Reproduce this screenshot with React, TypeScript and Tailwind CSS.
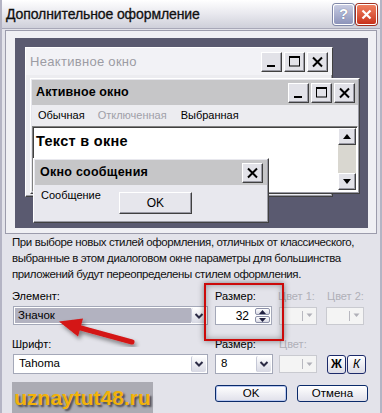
import React from "react";

const raised =
  "border border-solid border-t-white border-l-white border-r-[#404040] border-b-[#404040] shadow-[inset_-1px_-1px_0_#9a9aa4]";

function MinIcon() {
  return (
    <svg width="13" height="13" viewBox="0 0 13 13">
      <rect x="2" y="10" width="8" height="2" fill="#000" />
    </svg>
  );
}
function MaxIcon() {
  return (
    <svg width="13" height="13" viewBox="0 0 13 13">
      <rect x="1.5" y="1.5" width="10" height="9.5" fill="none" stroke="#000" strokeWidth="1" />
      <rect x="1" y="1" width="11" height="2" fill="#000" />
    </svg>
  );
}
function CloseIcon() {
  return (
    <svg width="13" height="12" viewBox="0 0 13 12">
      <path d="M2 1.5 L11 10.5 M11 1.5 L2 10.5" stroke="#000" strokeWidth="2" />
    </svg>
  );
}

function WinBtn({ children }: { children: React.ReactNode }) {
  return (
    <div className={`w-[21px] h-[20px] flex items-center justify-center bg-[#e2e2e8] ${raised}`}>
      {children}
    </div>
  );
}

function Chevron({ color = "#2b2b45" }: { color?: string }) {
  return (
    <svg width="10" height="8" viewBox="0 0 10 8">
      <path d="M1.5 2 L5 5.5 L8.5 2" fill="none" stroke={color} strokeWidth="2" />
    </svg>
  );
}

function DropBtn() {
  return (
    <div className="w-[15px] h-full flex items-center justify-center bg-gradient-to-b from-white to-[#d8d9e4] border-l border-[#c5c8d6] rounded-[2px]">
      <Chevron />
    </div>
  );
}

function DisabledCombo({ className = "" }: { className?: string }) {
  return (
    <div className={`h-[18px] border border-[#c9cad0] bg-[#f4f4f4] flex items-center justify-end ${className}`}>
      <div className="w-[1px] h-[10px] bg-[#b8b8c0] mr-[3px]" />
      <svg width="7" height="5" viewBox="0 0 7 5" className="mr-[3px]">
        <path d="M0.5 0.5 L6.5 0.5 L3.5 4 Z" fill="#b0b0b8" />
      </svg>
    </div>
  );
}

export default function App() {
  return (
    <div className="relative w-[382px] h-[413px] overflow-hidden bg-[#e3e3ea] font-['Liberation_Sans',Arial,sans-serif] text-black border-x-[2px] border-[#b4b4c4]">
      {/* Title bar */}
      <div className="h-[29px] flex items-center justify-between pl-[4px] pr-[3px] bg-gradient-to-b from-[#ffffff] via-[#e8e8ee] to-[#cfd0da] border-b border-[#a8a8b8]">
        <span className="text-[14px] tracking-[-0.1px] text-[#101010] [-webkit-text-stroke:0.3px_#101010]">Дополнительное оформление</span>
        <div className="flex gap-[2px]">
          <div className="w-[21px] h-[21px] rounded-[3px] border border-white bg-gradient-to-b from-[#c8cce2] to-[#8d94ba] flex items-center justify-center shadow-[0_0_0_1px_#8088a8]">
            <span className="text-[15px] font-bold text-white [text-shadow:0_0_1px_#505878]">?</span>
          </div>
          <div className="w-[21px] h-[21px] rounded-[3px] border border-white bg-gradient-to-b from-[#f08060] to-[#c8301a] flex items-center justify-center shadow-[0_0_0_1px_#a03020]">
            <svg width="13" height="13" viewBox="0 0 13 13">
              <path d="M2.5 2.5 L10.5 10.5 M10.5 2.5 L2.5 10.5" stroke="#fff" strokeWidth="2.2" />
            </svg>
          </div>
        </div>
      </div>

      {/* Preview frame */}
      <div className="mx-[3px] mt-[1px] h-[204px] bg-[#f0f0f4] border border-[#9c9cac] pt-[7px] pl-[9px] pr-[8px]">
        <div className="relative h-[190px] bg-[#5a5a70]">
          {/* Inactive window */}
          <div className={`absolute left-[10px] top-[9px] w-[308px] h-[150px] bg-[#ececf0] ${raised}`}>
            <div className="h-[27px] flex items-center justify-between pl-[4px] pr-[4px] bg-[#f2f2f6]">
              <span className="text-[13px] tracking-[0.3px] text-[#9c9ca4]">Неактивное окно</span>
              <div className="flex gap-[2px]">
                <WinBtn><MinIcon /></WinBtn>
                <WinBtn><MaxIcon /></WinBtn>
                <WinBtn><CloseIcon /></WinBtn>
              </div>
            </div>
          </div>

          {/* Active window */}
          <div className={`absolute left-[15px] top-[40px] w-[330px] h-[116px] bg-[#e6e6ec] p-[1px] flex flex-col ${raised}`}>
            <div className="h-[25px] flex items-center justify-between pl-[4px] pr-[3px] bg-[#c6c6c8]">
              <span className="text-[12.5px] font-bold tracking-[0.1px]">Активное окно</span>
              <div className="flex gap-[2px]">
                <WinBtn><MinIcon /></WinBtn>
                <WinBtn><MaxIcon /></WinBtn>
                <WinBtn><CloseIcon /></WinBtn>
              </div>
            </div>
            <div className="h-[21px] flex items-center pl-[6px] text-[11px] bg-[#ececf0]">
              <span>Обычная</span>
              <span className="ml-[13px] text-[#a0a0a8]">Отключенная</span>
              <span className="ml-[14px]">Выбранная</span>
            </div>
            <div className="flex-1 flex border border-t-[#808080] border-l-[#808080] border-r-white border-b-white shadow-[inset_1px_1px_0_#404040] bg-white">
              <div className="flex-1 pl-[3px] pt-[2px]">
                <span className="text-[14.5px] font-bold tracking-[0.3px]">Текст в окне</span>
              </div>
              <div className="w-[18px] flex flex-col bg-[#d9d7d0] my-[1px] mr-[1px]">
                <div className={`h-[17px] flex items-center justify-center bg-[#e2e2e8] ${raised}`}>
                  <svg width="8" height="5" viewBox="0 0 8 5"><path d="M0 5 L8 5 L4 0 Z" fill="#000" /></svg>
                </div>
                <div className="flex-1" />
                <div className={`h-[17px] flex items-center justify-center bg-[#e2e2e8] ${raised}`}>
                  <svg width="8" height="5" viewBox="0 0 8 5"><path d="M0 0 L8 0 L4 5 Z" fill="#000" /></svg>
                </div>
              </div>
            </div>
          </div>

          {/* Message box */}
          <div className={`absolute left-[18px] top-[120px] w-[236px] h-[65px] bg-[#e8e8ee] p-[1px] ${raised}`}>
            <div className="h-[25px] flex items-center justify-between pl-[5px] pr-[4px] bg-[#c6c6c8]">
              <span className="text-[12.5px] font-bold tracking-[0.25px]">Окно сообщения</span>
              <WinBtn><CloseIcon /></WinBtn>
            </div>
            <div className="flex items-start pl-[6px]">
              <span className="text-[11px] mt-[2px]">Сообщение</span>
              <div className={`ml-[18px] mt-[7px] w-[73px] h-[22px] flex items-center justify-center text-[12px] bg-[#e6e6ec] ${raised}`}>
                OK
              </div>
            </div>
          </div>
        </div>
      </div>

      {/* Description */}
      <div className="pl-[10px] text-[11.5px] tracking-[-0.4px] leading-[16px] text-[#111] whitespace-nowrap">
        <div>При выборе новых стилей оформления, отличных от классического,</div>
        <div>выбранные в этом диалоговом окне параметры для большинства</div>
        <div>приложений будут переопределены стилем оформления.</div>
      </div>

      {/* Row 1 labels */}
      <div className="mt-[7px] flex h-[14px] items-center text-[11px] leading-[14px]">
        <span className="ml-[10px] w-[203px]">Элемент:</span>
        <span className="w-[63px]">Размер:</span>
        <span className="w-[49px] text-[#b0b0b8]">Цвет 1:</span>
        <span className="text-[#b0b0b8]">Цвет 2:</span>
      </div>
      {/* Row 1 controls */}
      <div className="mt-[3px] flex items-center h-[19px]">
        <div className="ml-[11px] w-[195px] h-[19px] flex border border-[#a4a8b8] bg-white p-[1px]">
          <div className="flex-1 bg-[#b2b2c0] flex items-center pl-[3px] text-[11.5px]">Значок</div>
          <DropBtn />
        </div>
        <div className="ml-[7px] w-[57px] h-[19px] flex border border-[#a4a8b8] bg-white">
          <div className="flex-1 flex items-center justify-end pr-[5px] text-[12px]">32</div>
          <div className="w-[17px] flex flex-col gap-[1px] p-[1px]">
            <div className="flex-1 flex items-center justify-center rounded-[2px] border border-[#8c90a8] bg-gradient-to-b from-white to-[#d8d9e4]">
              <svg width="7" height="4" viewBox="0 0 7 4"><path d="M0 4 L7 4 L3.5 0 Z" fill="#202040" /></svg>
            </div>
            <div className="flex-1 flex items-center justify-center rounded-[2px] border border-[#8c90a8] bg-gradient-to-b from-white to-[#d8d9e4]">
              <svg width="7" height="4" viewBox="0 0 7 4"><path d="M0 0 L7 0 L3.5 4 Z" fill="#202040" /></svg>
            </div>
          </div>
        </div>
        <DisabledCombo className="ml-[7px] w-[38px]" />
        <DisabledCombo className="ml-[9px] w-[38px]" />
      </div>

      {/* Row 2 labels */}
      <div className="mt-[12px] flex h-[14px] items-center text-[11px] leading-[14px]">
        <span className="ml-[10px] w-[203px]">Шрифт:</span>
        <span className="w-[64px]">Размер:</span>
        <span className="text-[#b0b0b8]">Цвет:</span>
      </div>
      {/* Row 2 controls */}
      <div className="mt-[3px] flex items-center h-[20px]">
        <div className="ml-[11px] w-[195px] h-[20px] flex border border-[#a4a8b8] bg-white p-[1px]">
          <div className="flex-1 flex items-center pl-[4px] text-[11.5px]">Tahoma</div>
          <DropBtn />
        </div>
        <div className="ml-[7px] w-[58px] h-[20px] flex border border-[#a4a8b8] bg-white p-[1px]">
          <div className="flex-1 flex items-center pl-[4px] text-[11.5px]">8</div>
          <DropBtn />
        </div>
        <DisabledCombo className="ml-[6px] w-[38px]" />
        <div className="ml-[10px] w-[19px] h-[19px] rounded-[3px] border border-[#1c2a6a] bg-gradient-to-b from-white to-[#dcdce6] flex items-center justify-center">
          <span className="text-[12px] font-bold">Ж</span>
        </div>
        <div className="ml-[1px] w-[19px] h-[19px] rounded-[3px] border border-[#1c2a6a] bg-gradient-to-b from-white to-[#dcdce6] flex items-center justify-center">
          <span className="text-[12px] italic">К</span>
        </div>
      </div>

      {/* Row 3 */}
      <div className="mt-[8px] flex items-start">
        <div className="ml-[10px] w-[141px] h-[31px] bg-[#ababb3] flex items-center justify-center">
          <span className="text-[21px] leading-[24px] font-bold text-[#f2b20a] [text-shadow:2px_2px_2px_#4a4a52] tracking-[0px]">uznaytut48.ru</span>
        </div>
        <div className="ml-[62px] mt-[3px] w-[72px] h-[17px] rounded-[3px] border border-[#0a2a6a] bg-gradient-to-b from-white to-[#e0e0ea] shadow-[inset_0_0_0_1px_#b8c8f0] flex items-center justify-center text-[11.5px]">
          OK
        </div>
        <div className="ml-[10px] mt-[3px] w-[71px] h-[17px] rounded-[3px] border border-[#0a2a6a] bg-gradient-to-b from-white to-[#e0e0ea] flex items-center justify-center text-[11.5px]">
          Отмена
        </div>
      </div>

      {/* Red highlight rectangle */}
      <div className="absolute left-[202px] top-[283px] w-[80px] h-[58px] border-[2px] border-[#cc0a0a] shadow-[0_0_6px_rgba(0,0,0,0.45),inset_0_0_6px_rgba(0,0,0,0.35)] pointer-events-none" />

      {/* Red arrow */}
      <svg className="absolute left-0 top-0 pointer-events-none" width="382" height="413" viewBox="0 0 382 413">
        <defs>
          <filter id="sh" x="-20%" y="-20%" width="140%" height="140%">
            <feDropShadow dx="2" dy="3" stdDeviation="2" floodColor="#000" floodOpacity="0.45" />
          </filter>
        </defs>
        <g filter="url(#sh)">
          <line x1="130" y1="342" x2="77" y2="327.5" stroke="#d41414" strokeWidth="5" strokeLinecap="round" />
          <path d="M57 321.5 L81 318.5 L76 336.5 Z" fill="#d41414" />
        </g>
      </svg>
    </div>
  );
}
